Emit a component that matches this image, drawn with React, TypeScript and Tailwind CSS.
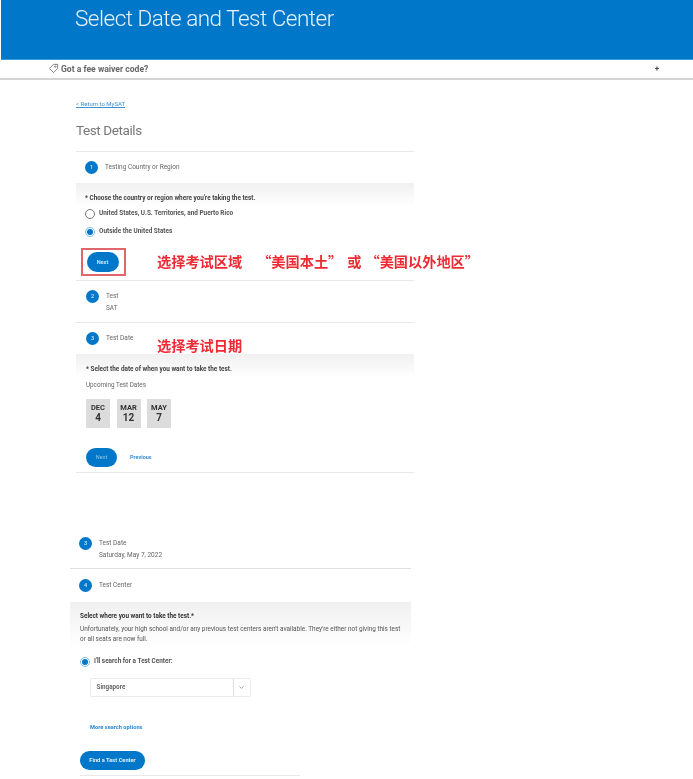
import { ChevronDown } from "lucide-react"

const font = { fontFamily: "Roboto, 'Noto Sans CJK SC', sans-serif" }
const redFont = { fontFamily: "'Noto Sans CJK SC', sans-serif" }

function StepBadge({ n }: { n: number }) {
  return (
    <div className="flex h-[13px] w-[13px] shrink-0 items-center justify-center rounded-full bg-[#0077c8] text-[5.5px] font-medium text-[#cfe6f6]">
      {n}
    </div>
  )
}

function StepHead({ n, title, sub, className }: { n: number; title: string; sub?: string; className: string }) {
  return (
    <div className={`flex items-start gap-[7px] ${className}`}>
      <StepBadge n={n} />
      <div className="text-[6.5px] leading-[11px] text-[#666666]">
        <div className="leading-[13px]">{title}</div>
        {sub && <div>{sub}</div>}
      </div>
    </div>
  )
}

function Radio({ checked, label }: { checked?: boolean; label: string }) {
  return (
    <div className="flex items-center gap-[4px]">
      <div
        className={`flex h-[10px] w-[10px] shrink-0 items-center justify-center rounded-full border bg-white ${
          checked ? "border-[#7fbbe3]" : "border-[#777777]"
        }`}
      >
        {checked && <div className="h-[6px] w-[6px] rounded-full bg-[#0077c8]" />}
      </div>
      <span className="text-[6.4px] font-bold text-[#555555]">{label}</span>
    </div>
  )
}

function DateTile({ month, day }: { month: string; day: string }) {
  return (
    <div className="flex h-[29px] w-[24px] flex-col items-center justify-center bg-[#dcdcdc] font-bold leading-none text-[#333333]">
      <span className="text-[7.5px]">{month}</span>
      <span className="mt-[1px] text-[10px]">{day}</span>
    </div>
  )
}

export default function App() {
  return (
    <div style={font} className="relative h-[779px] w-[693px] overflow-hidden bg-white blur-[0.5px]">
      <header className="ml-px h-[60px] border-b border-[#3f9ad8] bg-[#0077c8] pl-[74px] pt-[3px]">
        <h1 className="text-[22.5px] font-light leading-[30px] tracking-[-0.5px] text-[#e8f3fb]">
          Select Date and Test Center
        </h1>
      </header>

      <div className="flex h-[20px] items-center justify-between border-b-2 border-[#d4d4d4] pl-[48px] pr-[34px]">
        <div className="flex items-center gap-[2px]">
          <svg width="11" height="11" viewBox="0 0 24 24" fill="none" stroke="#777777" strokeWidth="2">
            <path d="M3 12 L12 3 H21 V12 L12 21 Z" />
            <circle cx="16" cy="8" r="1.6" />
          </svg>
          <span className="text-[8.6px] font-bold text-[#666666]">Got a fee waiver code?</span>
        </div>
        <span className="text-[8px] font-bold leading-none text-[#444444]">+</span>
      </div>

      <section className="ml-[76px] w-[338px]">
        <a className="mt-[20px] block text-[6px] leading-[8px] text-[#3f8fd0] underline">&lt; Return to MySAT</a>
        <h2 className="mt-[12px] text-[13.5px] leading-[20px] tracking-[-0.4px] text-[#777777]">Test Details</h2>

        <div className="mt-[11px] border-t border-[#e8e8e8]">
          <StepHead n={1} title="Testing Country or Region" className="pl-[9px] pt-[9px] h-[31px]" />
        </div>
        <div className="h-[97px] bg-gradient-to-b from-[#f0f0f0] to-white to-[24%] pl-[9px] pt-[11px]">
          <p className="text-[6.4px] font-bold leading-[8px] text-[#444444]">
            * Choose the country or region where you're taking the test.
          </p>
          <div className="mt-[7px] flex flex-col gap-[8px]">
            <Radio label="United States, U.S. Territories, and Puerto Rico" />
            <Radio checked label="Outside the United States" />
          </div>
          <div style={redFont} className="mt-[11px] flex items-center whitespace-nowrap text-[14.2px] font-bold text-[#ee2a33]">
            <div className="-ml-[4px] flex h-[28px] w-[45px] shrink-0 items-center border-2 border-[#e0666c] pl-[3.5px]">
              <div style={font} className="flex h-[20px] w-[32px] items-center justify-center rounded-full bg-[#0077c8] text-[5.5px] text-[#cfe6f6]">
                Next
              </div>
            </div>
            <div className="ml-[31px] shrink-0">选择考试区域</div>
            <div className="ml-[15px] shrink-0">“美国本土”</div>
            <div className="ml-[5px] shrink-0">或</div>
            <div className="ml-[4px] shrink-0">“美国以外地区”</div>
          </div>
        </div>

        <div className="border-t border-[#e8e8e8]">
          <StepHead n={2} title="Test" sub="SAT" className="pl-[10px] pt-[9px] h-[41px]" />
        </div>
        <div className="relative border-t border-[#e8e8e8]">
          <StepHead n={3} title="Test Date" className="pl-[10px] pt-[9px] h-[31px]" />
          <div style={redFont} className="absolute left-[81px] top-[12px] text-[14.2px] font-bold leading-[20px] text-[#ee2a33]">
            选择考试日期
          </div>
        </div>
        <div className="h-[118px] bg-gradient-to-b from-[#f0f0f0] to-white to-[20%] pl-[10px] pt-[11px]">
          <p className="text-[6.4px] font-bold leading-[8px] text-[#444444]">
            * Select the date of when you want to take the test.
          </p>
          <p className="mt-[8px] text-[6.3px] leading-[8px] text-[#666666]">Upcoming Test Dates</p>
          <div className="mt-[10px] flex gap-[6.5px]">
            <DateTile month="DEC" day="4" />
            <DateTile month="MAR" day="12" />
            <DateTile month="MAY" day="7" />
          </div>
          <div className="mt-[20px] flex items-center gap-[13px]">
            <div className="flex h-[19px] w-[31px] items-center justify-center rounded-full bg-[#0077c8] text-[5.5px] text-[#8fc3e6]">
              Next
            </div>
            <a className="text-[5.5px] font-bold text-[#3f8fd0]">Previous</a>
          </div>
        </div>
        <div className="border-t border-[#e8e8e8]" />
      </section>

      <section className="ml-[70px] mt-[64px] w-[341px]">
        <StepHead n={3} title="Test Date" sub="Saturday, May 7, 2022" className="pl-[9px] h-[31px]" />
        <div className="border-t border-[#e0e0e0]">
          <StepHead n={4} title="Test Center" className="pl-[9px] pt-[10px] h-[33px]" />
        </div>
        <div className="h-[45px] bg-gradient-to-b from-[#f0f0f0] to-white pl-[10px] pt-[10px]">
          <p className="text-[6.4px] font-bold leading-[8px] text-[#333333]">Select where you want to take the test.*</p>
          <p className="mt-[4px] w-[323px] text-[6.42px] leading-[10px] text-[#555555]">
            Unfortunately, your high school and/or any previous test centers aren't available. They're either not giving this test or all seats are now full.
          </p>
        </div>
        <div className="pl-[10px] pt-[10px]">
          <Radio checked label="I'll search for a Test Center:" />
          <div className="ml-[9.5px] mt-[11px] flex h-[19px] w-[161px] items-center rounded-[2px] border border-[#eaeaea]">
            <span className="flex-1 pl-[6px] text-[6.3px] font-bold text-[#666666]">Singapore</span>
            <span className="flex h-full w-[17px] items-center justify-center border-l border-[#dddddd]">
              <ChevronDown size={7} color="#666666" strokeWidth={2} />
            </span>
          </div>
          <a className="ml-[10px] mt-[26px] block text-[5.7px] font-bold leading-[8px] text-[#2b8ad0]">More search options</a>
          <div className="mt-[20px] flex h-[19px] w-[65px] items-center justify-center rounded-full bg-[#0077c8] text-[5.7px] font-bold text-[#e0effa]">
            Find a Test Center
          </div>
          <div className="mt-[5px] w-[220px] border-t border-[#e8e8e8]" />
        </div>
      </section>
    </div>
  )
}
